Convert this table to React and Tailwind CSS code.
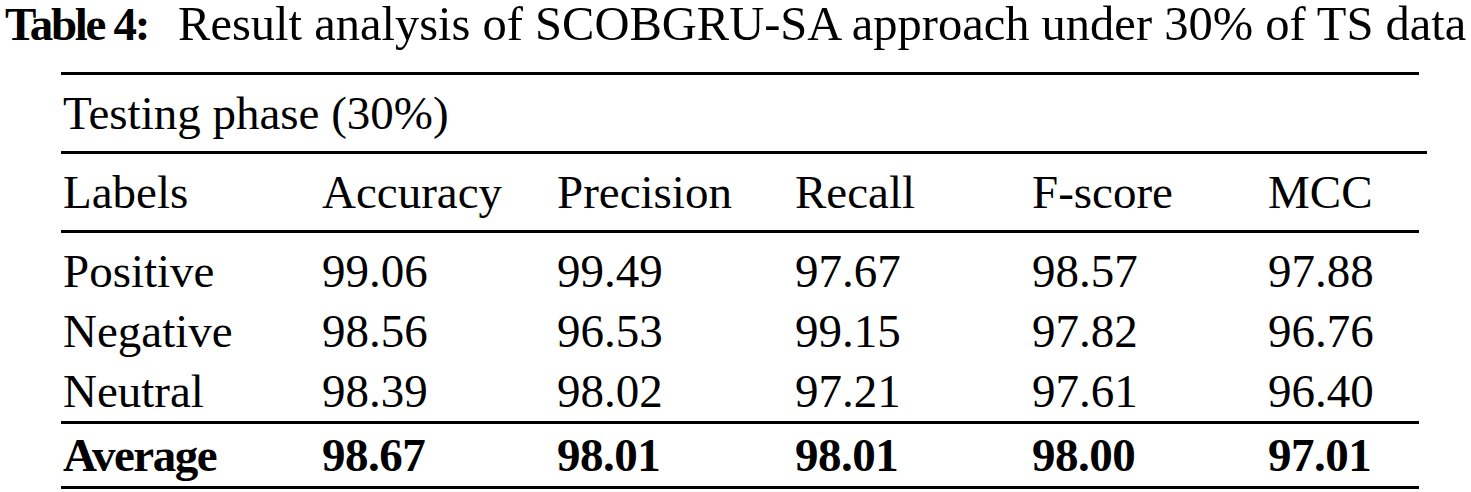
export default function App() {
  const rows = [
    ["Positive", "99.06", "99.49", "97.67", "98.57", "97.88"],
    ["Negative", "98.56", "96.53", "99.15", "97.82", "96.76"],
    ["Neutral", "98.39", "98.02", "97.21", "97.61", "96.40"],
  ];
  const avg = ["Average", "98.67", "98.01", "98.01", "98.00", "97.01"];
  const head = ["Labels", "Accuracy", "Precision", "Recall", "F-score", "MCC"];
  const cols = "grid grid-cols-[259px_235px_238px_237px_236px_1fr]";
  return (
    <div
      className="w-[1471px] h-[492px] bg-white text-black overflow-hidden"
      style={{ fontFamily: '"Liberation Serif", "Times New Roman", serif' }}
    >
      <div className="pl-[5px] pt-[2px] h-[72px] text-[48.5px] leading-[44px] whitespace-nowrap">
        <span className="font-bold tracking-[-2.3px] text-[47px]">Table 4:</span>
        <span className="ml-[30px]">Result analysis of SCOBGRU-SA approach under 30% of TS data</span>
      </div>
      <div className="ml-[61px] w-[1358px] text-[47px] leading-[56px]">
        <div className="h-[3px] bg-black" />
        <div className="h-[76px] flex items-center pl-[2px]">Testing phase (30%)</div>
        <div className="h-[3px] bg-black w-[1366px]" />
        <div className={`${cols} h-[76px] items-center`}>
          {head.map((h) => (
            <div key={h} className="pl-[2px]">{h}</div>
          ))}
        </div>
        <div className="h-[3px] bg-black" />
        <div className="pt-[8px]">
          {rows.map((r) => (
            <div key={r[0]} className={`${cols} h-[60px] items-center`}>
              {r.map((c, i) => (
                <div key={i} className="pl-[2px]">{c}</div>
              ))}
            </div>
          ))}
        </div>
        <div className="h-[3px] bg-black" />
        <div className={`${cols} h-[62px] items-center font-bold`}>
          {avg.map((c, i) => (
            <div key={i} className={i === 0 ? "pl-[2px] tracking-[-1.5px]" : "pl-[2px] tracking-[-0.5px]"}>{c}</div>
          ))}
        </div>
        <div className="h-[3px] bg-black" />
      </div>
    </div>
  );
}
